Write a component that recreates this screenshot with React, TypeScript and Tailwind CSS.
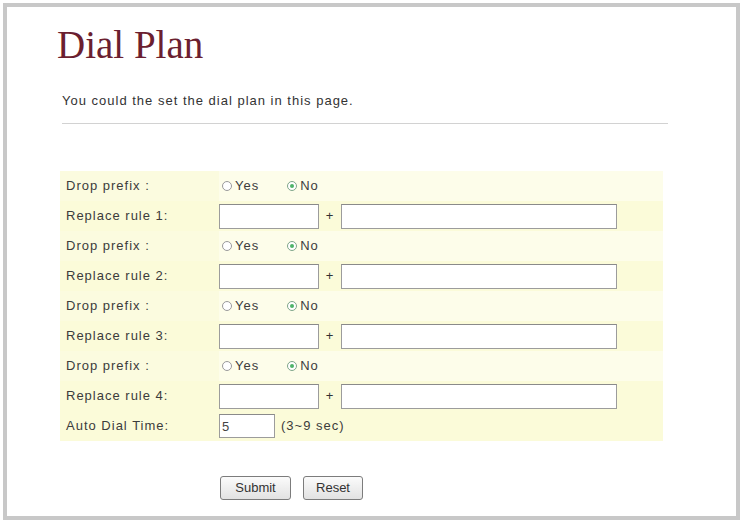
import React from "react";

const sans = { fontFamily: '"Liberation Sans", Arial, sans-serif' };

const Radio = ({ checked, label }: { checked?: boolean; label: string }) => (
  <label className="flex items-center">
    <span
      className={`flex h-[10px] w-[10px] items-center justify-center rounded-full border bg-white ${
        checked ? "border-[#7fa68a]" : "border-[#9a9a9a]"
      }`}
    >
      {checked && <span className="h-[4px] w-[4px] rounded-full bg-[#4fb36a]" />}
    </span>
    <span className="ml-[3px]">{label}</span>
  </label>
);

const DropRow = () => (
  <div className="flex h-[30px] items-center bg-[#fdfdea]">
    <div className="flex h-full w-[159px] items-center bg-[#fbfbdf] pl-[6px]">Drop prefix :</div>
    <div className="ml-[3px] flex items-center gap-[28px]">
      <Radio label="Yes" />
      <Radio checked label="No" />
    </div>
  </div>
);

const ReplaceRow = ({ n }: { n: number }) => (
  <div className="flex h-[30px] items-center bg-[#fbfbd9]">
    <div className="flex h-full w-[159px] items-center pl-[6px]">Replace rule {n}:</div>
    <input
      readOnly
      className="h-[25px] w-[100px] border border-[#9c9c9c] border-t-[#8a8a8a] bg-white outline-none"
    />
    <span className="flex w-[22px] justify-center text-[#333]">+</span>
    <input
      readOnly
      className="h-[25px] w-[276px] border border-[#9c9c9c] border-t-[#8a8a8a] bg-white outline-none"
    />
  </div>
);

export default function App() {
  return (
    <div
      className="ml-[3px] mt-[3px] h-[517px] w-[737px] border-4 border-[#c8c8c8] bg-white pl-[55px] pt-[18px] text-[13px] tracking-[1px] text-[#3c3c3c]"
      style={sans}
    >
      <h1
        className="-ml-[5px] text-[39px] leading-[39px] tracking-normal text-[#6b1f30]"
        style={{ fontFamily: '"Liberation Serif", "Times New Roman", serif' }}
      >
        Dial Plan
      </h1>
      <p className="mt-[29px] leading-[16px] text-[#333]">You could the set the dial plan in this page.</p>
      <div className="mt-[14px] w-[606px] border-t border-[#d2d2d2]" />

      <div className="-ml-[2px] mt-[47px] w-[603px]">
        <DropRow />
        <ReplaceRow n={1} />
        <DropRow />
        <ReplaceRow n={2} />
        <DropRow />
        <ReplaceRow n={3} />
        <DropRow />
        <ReplaceRow n={4} />
        <div className="flex h-[30px] items-center bg-[#fbfbd9]">
          <div className="flex h-full w-[159px] items-center pl-[6px]">Auto Dial Time:</div>
          <input
            readOnly
            defaultValue="5"
            className="h-[24px] w-[56px] border border-[#9c9c9c] border-t-[#8a8a8a] bg-white pl-[2px] text-[13px] text-[#444] outline-none"
          />
          <span className="ml-[6px]">(3~9 sec)</span>
        </div>
      </div>

      <div className="mt-[35px] ml-[158px] flex gap-[12px]">
        <button className="h-[24px] w-[71px] rounded-[3px] border border-[#7c7c7c] bg-gradient-to-b from-[#fbfbfb] to-[#e2e2e2] text-[13px] tracking-normal text-[#333]">
          Submit
        </button>
        <button className="h-[24px] w-[60px] rounded-[3px] border border-[#7c7c7c] bg-gradient-to-b from-[#fbfbfb] to-[#e2e2e2] text-[13px] tracking-normal text-[#333]">
          Reset
        </button>
      </div>
    </div>
  );
}
